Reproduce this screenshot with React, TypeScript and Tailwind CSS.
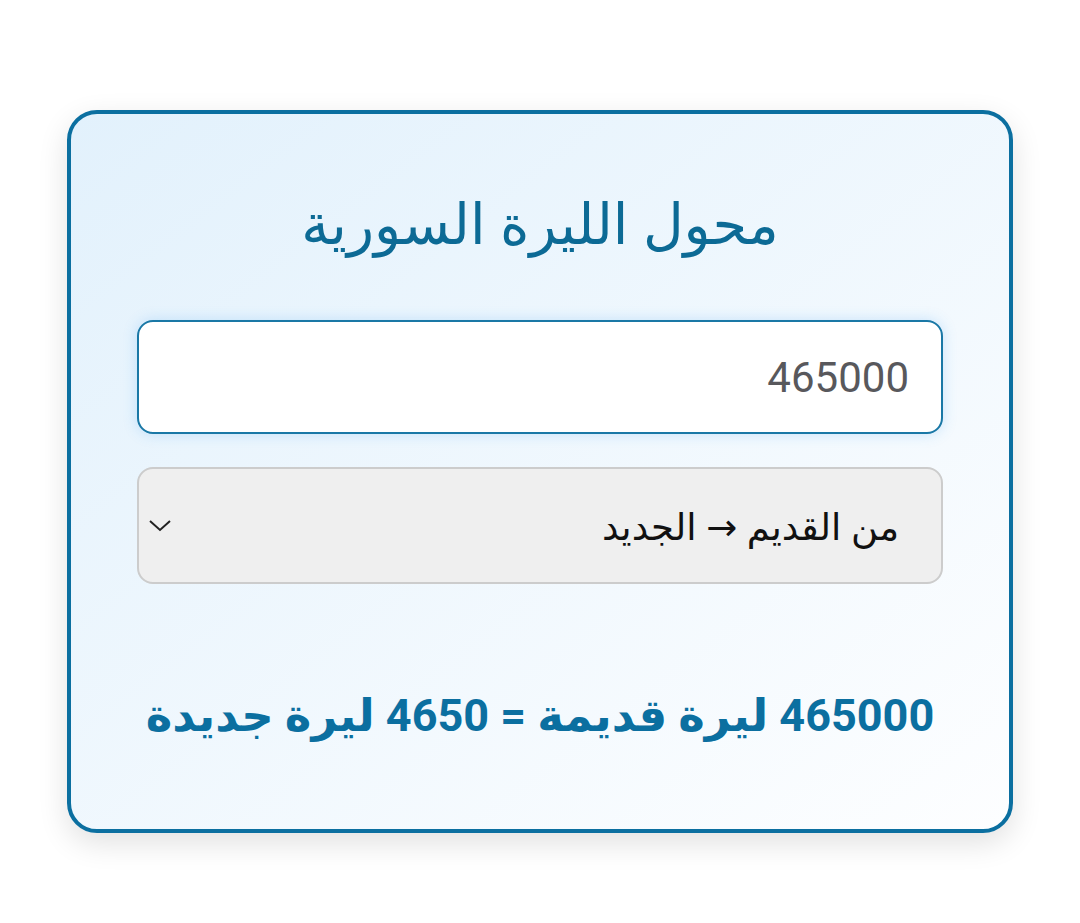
import { useState } from 'react';

export default function App() {
    const [valor, setValor] = useState('465000');
    const [modo, setModo] = useState('old-new');

    const n = Number(valor) || 0;
    const resultado =
        modo === 'old-new'
            ? `${n} ليرة قديمة = ${n / 100} ليرة جديدة`
            : `${n} ليرة جديدة = ${n * 100} ليرة قديمة`;

    return (
        <div dir="rtl" className="min-h-[923px] w-[1080px] bg-white pt-[110px] px-[67px] font-['DejaVu_Sans',sans-serif]">
            <div className="w-[946px] h-[723px] rounded-[30px] border-4 border-[#0b6fa0] bg-gradient-to-br from-[#e2f1fc] to-[#fdfeff] shadow-[0_10px_30px_rgba(0,0,0,0.12)] px-[66px] pt-[72px]">
                <h1 className="text-center text-[56px] leading-[72px] text-[#0c6a95] font-['Noto_Sans','DejaVu_Sans',sans-serif]">
                    محول الليرة السورية
                </h1>

                <input
                    type="text"
                    value={valor}
                    onChange={(e) => setValor(e.target.value)}
                    className="mt-[62px] block w-[806px] h-[114px] rounded-[16px] border-2 border-[#1a78a6] bg-white px-[32px] text-right text-[42px] text-[#58585c] shadow-[0_0_14px_rgba(66,165,245,0.25)] outline-none font-['Roboto',sans-serif]"
                />

                <div className="relative mt-[33px] w-[806px] h-[117px]">
                    <select
                        value={modo}
                        onChange={(e) => setModo(e.target.value)}
                        className="appearance-none block w-full h-full rounded-[16px] border-2 border-[#cccccc] bg-[#efefef] pr-[42px] pl-[60px] text-[37px] text-[#111] outline-none font-['Noto_Sans','DejaVu_Sans',sans-serif]"
                    >
                        <option value="old-new">من القديم → الجديد</option>
                        <option value="new-old">من الجديد → القديم</option>
                    </select>
                    <svg
                        className="pointer-events-none absolute left-[12px] top-[52px]"
                        width="22"
                        height="14"
                        viewBox="0 0 22 14"
                        fill="none"
                        stroke="#222"
                        strokeWidth="2"
                    >
                        <path d="M1 2 L11 11 L21 2" />
                    </svg>
                </div>

                <p className="mt-[100px] text-center text-[45px] leading-[64px] font-bold text-[#0b6fa0] font-['Roboto','DejaVu_Sans',sans-serif]">
                    {resultado}
                </p>
            </div>
        </div>
    );
}
